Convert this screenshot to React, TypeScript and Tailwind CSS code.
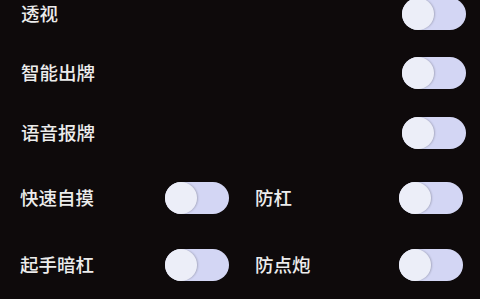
import React from "react";

function Toggle() {
  return (
    <div className="relative h-[32px] w-[64px] shrink-0 rounded-full bg-[#d3d6f4]">
      <div className="absolute left-0 top-0 h-[32px] w-[32px] rounded-full bg-[#eceef8] shadow-[1px_0_2px_rgba(0,0,0,0.2)]" />
    </div>
  );
}

function Label({ children }: { children: React.ReactNode }) {
  return (
    <span className="-mt-[2px] text-[18.5px] font-medium leading-none text-[#ececec]">{children}</span>
  );
}

export default function App() {
  return (
    <div
      className="h-[299px] w-[480px] overflow-hidden bg-[#0e0a0b]"
      style={{ fontFamily: '"Noto Sans CJK SC", "Noto Sans", sans-serif' }}
    >
      <div className="-mt-[2px] flex flex-col">
        <div className="flex h-[32px] items-center justify-between pl-[21px] pr-[14px]">
          <Label>透视</Label>
          <Toggle />
        </div>
        <div className="mt-[27px] flex h-[32px] items-center justify-between pl-[21px] pr-[14px]">
          <Label>智能出牌</Label>
          <Toggle />
        </div>
        <div className="mt-[28px] flex h-[32px] items-center justify-between pl-[21px] pr-[14px]">
          <Label>语音报牌</Label>
          <Toggle />
        </div>
        <div className="mt-[33px] grid h-[32px] grid-cols-2">
          <div className="flex items-center justify-between pl-[20px] pr-[11px]">
            <Label>快速自摸</Label>
            <Toggle />
          </div>
          <div className="flex items-center justify-between pl-[15px] pr-[17px]">
            <Label>防杠</Label>
            <Toggle />
          </div>
        </div>
        <div className="mt-[35px] grid h-[32px] grid-cols-2">
          <div className="flex items-center justify-between pl-[20px] pr-[11px]">
            <Label>起手暗杠</Label>
            <Toggle />
          </div>
          <div className="flex items-center justify-between pl-[15px] pr-[17px]">
            <Label>防点炮</Label>
            <Toggle />
          </div>
        </div>
      </div>
    </div>
  );
}
